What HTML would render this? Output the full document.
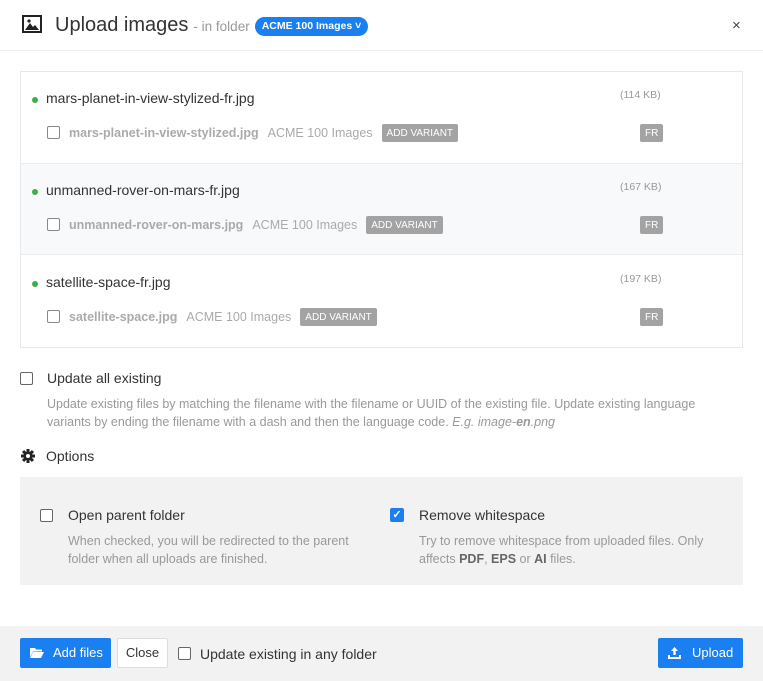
<!DOCTYPE html>
<html><head><meta charset="utf-8"><style>
*{box-sizing:border-box;margin:0;padding:0}
body{width:763px;height:681px;background:#fff;font-family:"Liberation Sans",sans-serif;color:#333;position:relative;overflow:hidden}
.a{position:absolute;white-space:nowrap}
.cb{position:absolute;width:13px;height:13px;border:1.5px solid #666;border-radius:2px;background:#fff}
.row{position:absolute;left:21px;width:721px;height:92px}
.dot{position:absolute;left:11px;top:26px;width:6px;height:6px;border-radius:50%;background:#3fae49}
.tag{background:#a3a3a3;color:#fff;font-size:10px;border-radius:2px;padding:0 5px;height:18px;display:inline-flex;align-items:center}
.sub{position:absolute;left:48px;top:53px;display:flex;align-items:center;gap:9px;font-size:12.5px;color:#aaa;white-space:nowrap}
.sub b{font-size:12.5px}
.sz{position:absolute;left:599px;top:18px;font-size:10.5px;color:#999}
.fr{position:absolute;left:619px;top:53px}
</style></head><body>
<svg class="a" style="left:22px;top:15px" width="20" height="18" viewBox="0 0 20 18"><rect x="1" y="1" width="18" height="16" fill="none" stroke="#222" stroke-width="2"/><path d="M3 15 L8 8 L11 12 L13 10 L17 15Z" fill="#222"/><circle cx="7" cy="6" r="1.6" fill="#222"/></svg>
<div class="a" style="left:55px;top:14px;display:flex;align-items:center;gap:5px">
<span style="font-size:20px;color:#333">Upload images</span>
<span style="font-size:13.5px;color:#999;margin-top:2px">- in folder</span>
<span style="height:19px;background:#1a7ff0;color:#fff;font-size:10.5px;font-weight:bold;border-radius:10px;padding:0 7px;line-height:19px;margin-top:2px">ACME 100 Images ˅</span>
</div>
<div class="a" style="left:732px;top:17px;font-size:15px;color:#444">×</div>
<div class="a" style="left:0;top:50px;width:763px;height:1px;background:#eee"></div>

<div class="a" style="left:20px;top:71px;width:723px;height:277px;border:1px solid #e8e8e8"></div>
<div class="a" style="left:21px;top:163px;width:721px;height:92px;background:#f8f9fb;border-top:1px solid #ececec;border-bottom:1px solid #ececec"></div>

<div class="row" style="top:71px">
<div class="dot"></div>
<div class="a" style="left:25px;top:19px;font-size:14px">mars-planet-in-view-stylized-fr.jpg</div>
<div class="sz">(114 KB)</div>
<div class="cb" style="left:26px;top:55px;border-color:#888"></div>
<div class="sub"><b>mars-planet-in-view-stylized.jpg</b><span>ACME 100 Images</span><span class="tag">ADD VARIANT</span></div>
<span class="tag fr">FR</span>
</div>
<div class="row" style="top:163px">
<div class="dot"></div>
<div class="a" style="left:25px;top:19px;font-size:14px">unmanned-rover-on-mars-fr.jpg</div>
<div class="sz">(167 KB)</div>
<div class="cb" style="left:26px;top:55px;border-color:#888"></div>
<div class="sub"><b>unmanned-rover-on-mars.jpg</b><span>ACME 100 Images</span><span class="tag">ADD VARIANT</span></div>
<span class="tag fr">FR</span>
</div>
<div class="row" style="top:255px">
<div class="dot"></div>
<div class="a" style="left:25px;top:19px;font-size:14px">satellite-space-fr.jpg</div>
<div class="sz">(197 KB)</div>
<div class="cb" style="left:26px;top:55px;border-color:#888"></div>
<div class="sub"><b>satellite-space.jpg</b><span>ACME 100 Images</span><span class="tag">ADD VARIANT</span></div>
<span class="tag fr">FR</span>
</div>

<div class="cb" style="left:20px;top:372px"></div>
<div class="a" style="left:47px;top:370px;font-size:14px">Update all existing</div>
<div class="a" style="left:47px;top:395px;font-size:12.5px;color:#999;line-height:18px;white-space:normal;width:665px">Update existing files by matching the filename with the filename or UUID of the existing file. Update existing language variants by ending the filename with a dash and then the language code. <i>E.g. image-<b>en</b>.png</i></div>

<svg class="a" style="left:21px;top:449px" width="14" height="14" viewBox="0 0 14 14"><g fill="#222"><circle cx="7" cy="7" r="4.5"/><rect x="5.5" y="0" width="3" height="14"/><rect x="0" y="5.5" width="14" height="3"/><rect x="5.5" y="0" width="3" height="14" transform="rotate(45 7 7)"/><rect x="5.5" y="0" width="3" height="14" transform="rotate(-45 7 7)"/></g><circle cx="7" cy="7" r="2" fill="#fff"/></svg>
<div class="a" style="left:46px;top:448px;font-size:14px">Options</div>

<div class="a" style="left:20px;top:477px;width:723px;height:108px;background:#f2f2f2"></div>
<div class="cb" style="left:40px;top:509px"></div>
<div class="a" style="left:68px;top:507px;font-size:14px">Open parent folder</div>
<div class="a" style="left:68px;top:532px;font-size:12.5px;color:#999;line-height:18px">When checked, you will be redirected to the parent<br>folder when all uploads are finished.</div>
<div class="a" style="left:390px;top:508px;width:14px;height:14px;background:#1a7ff0;border-radius:2px;color:#fff;font-size:11px;line-height:14px;text-align:center;font-weight:bold">✓</div>
<div class="a" style="left:419px;top:507px;font-size:14px">Remove whitespace</div>
<div class="a" style="left:419px;top:532px;font-size:12.5px;color:#999;line-height:18px">Try to remove whitespace from uploaded files. Only<br>affects <b style="color:#666">PDF</b>, <b style="color:#666">EPS</b> or <b style="color:#666">AI</b> files.</div>

<div class="a" style="left:0;top:626px;width:763px;height:55px;background:#f2f2f2"></div>
<div class="a" style="left:20px;top:638px;width:91px;height:30px;background:#1a7ff0;border-radius:2px;color:#fff;font-size:13px;line-height:30px;padding-left:33px">Add files</div>
<svg class="a" style="left:30px;top:647px" width="14" height="11" viewBox="0 0 14 11"><path d="M0 1h5l1 1.5h6v2H3L0 10Z M3 5h11l-3 6H0Z" fill="#fff"/></svg>
<div class="a" style="left:117px;top:638px;width:51px;height:30px;background:#fff;border:1px solid #ddd;border-radius:2px;font-size:13px;line-height:28px;text-align:center">Close</div>
<div class="cb" style="left:178px;top:647px"></div>
<div class="a" style="left:200px;top:646px;font-size:14px">Update existing in any folder</div>
<div class="a" style="left:658px;top:638px;width:85px;height:30px;background:#1a7ff0;border-radius:2px;color:#fff;font-size:13px;line-height:30px;padding-left:34px">Upload</div>
<svg class="a" style="left:668px;top:646px" width="13" height="13" viewBox="0 0 13 13"><path d="M6.5 1L3 5h2.3v4h2.4V5H10Z M0 9h2v2h9V9h2v4H0Z" fill="#fff"/></svg>
</body></html>
